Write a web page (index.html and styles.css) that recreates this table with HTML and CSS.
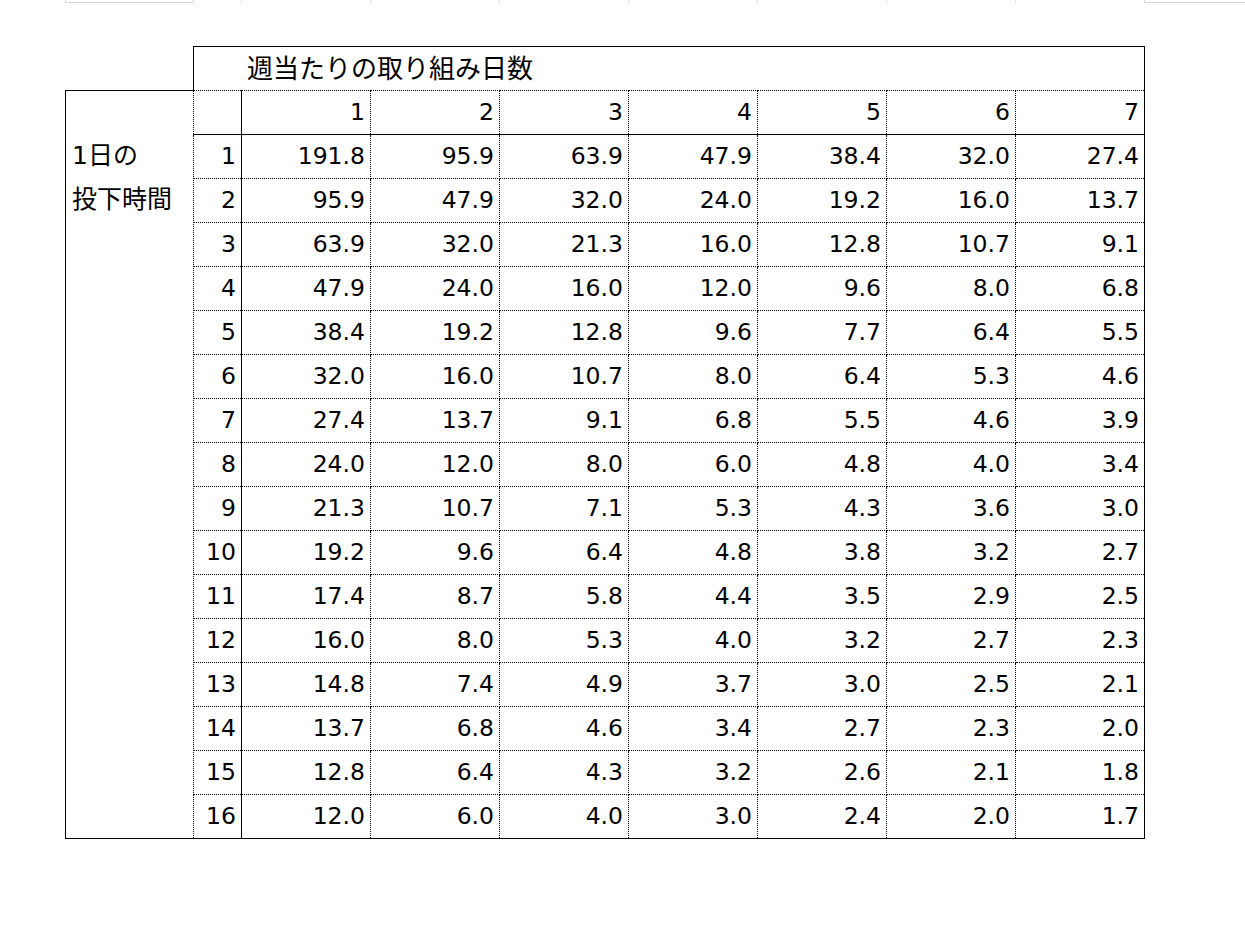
FILE: index.html
```html
<!DOCTYPE html>
<html lang="ja">
<head>
<meta charset="utf-8">
<link rel="stylesheet" href="styles.css">
</head>
<body>
<div class="strip">
  <span class="gap g1"></span>
  <span class="box b1"></span>
  <span class="gap g2"></span>
  <span class="tick"></span><span class="tick"></span><span class="tick"></span><span class="tick"></span><span class="tick"></span><span class="tick"></span><span class="tick"></span>
  <span class="box b2"></span>
</div>
<table class="sheet">
  <colgroup>
    <col class="c-label"><col class="c-num"><col class="c-data"><col class="c-data"><col class="c-data"><col class="c-data"><col class="c-data"><col class="c-data"><col class="c-data">
  </colgroup>
  <tr class="r-title">
    <td class="blank"></td>
    <td class="title" colspan="8">週当たりの取り組み日数</td>
  </tr>
  <tr class="r-head">
    <td class="side" rowspan="17"><div class="side-line">1日の</div><div class="side-line">投下時間</div></td>
    <td class="rn hd"></td>
    <td class="hd">1</td><td class="hd">2</td><td class="hd">3</td><td class="hd">4</td><td class="hd">5</td><td class="hd">6</td><td class="hd last">7</td>
  </tr>
  <tr><td class="rn">1</td><td>191.8</td><td>95.9</td><td>63.9</td><td>47.9</td><td>38.4</td><td>32.0</td><td class="last">27.4</td></tr>
  <tr><td class="rn">2</td><td>95.9</td><td>47.9</td><td>32.0</td><td>24.0</td><td>19.2</td><td>16.0</td><td class="last">13.7</td></tr>
  <tr><td class="rn">3</td><td>63.9</td><td>32.0</td><td>21.3</td><td>16.0</td><td>12.8</td><td>10.7</td><td class="last">9.1</td></tr>
  <tr><td class="rn">4</td><td>47.9</td><td>24.0</td><td>16.0</td><td>12.0</td><td>9.6</td><td>8.0</td><td class="last">6.8</td></tr>
  <tr><td class="rn">5</td><td>38.4</td><td>19.2</td><td>12.8</td><td>9.6</td><td>7.7</td><td>6.4</td><td class="last">5.5</td></tr>
  <tr><td class="rn">6</td><td>32.0</td><td>16.0</td><td>10.7</td><td>8.0</td><td>6.4</td><td>5.3</td><td class="last">4.6</td></tr>
  <tr><td class="rn">7</td><td>27.4</td><td>13.7</td><td>9.1</td><td>6.8</td><td>5.5</td><td>4.6</td><td class="last">3.9</td></tr>
  <tr><td class="rn">8</td><td>24.0</td><td>12.0</td><td>8.0</td><td>6.0</td><td>4.8</td><td>4.0</td><td class="last">3.4</td></tr>
  <tr><td class="rn">9</td><td>21.3</td><td>10.7</td><td>7.1</td><td>5.3</td><td>4.3</td><td>3.6</td><td class="last">3.0</td></tr>
  <tr><td class="rn">10</td><td>19.2</td><td>9.6</td><td>6.4</td><td>4.8</td><td>3.8</td><td>3.2</td><td class="last">2.7</td></tr>
  <tr><td class="rn">11</td><td>17.4</td><td>8.7</td><td>5.8</td><td>4.4</td><td>3.5</td><td>2.9</td><td class="last">2.5</td></tr>
  <tr><td class="rn">12</td><td>16.0</td><td>8.0</td><td>5.3</td><td>4.0</td><td>3.2</td><td>2.7</td><td class="last">2.3</td></tr>
  <tr><td class="rn">13</td><td>14.8</td><td>7.4</td><td>4.9</td><td>3.7</td><td>3.0</td><td>2.5</td><td class="last">2.1</td></tr>
  <tr><td class="rn">14</td><td>13.7</td><td>6.8</td><td>4.6</td><td>3.4</td><td>2.7</td><td>2.3</td><td class="last">2.0</td></tr>
  <tr><td class="rn">15</td><td>12.8</td><td>6.4</td><td>4.3</td><td>3.2</td><td>2.6</td><td>2.1</td><td class="last">1.8</td></tr>
  <tr class="r-end"><td class="rn">16</td><td>12.0</td><td>6.0</td><td>4.0</td><td>3.0</td><td>2.4</td><td>2.0</td><td class="last">1.7</td></tr>
</table>
</body>
</html>
```
FILE: styles.css
```css
html, body {
  margin: 0;
  padding: 0;
  background: #ffffff;
}

body {
  font-family: "DejaVu Sans", "Noto Sans CJK JP", sans-serif;
  color: #000000;
}

.strip {
  display: flex;
  height: 3px;
}
.strip .gap.g1 { width: 65px; }
.strip .gap.g2 { width: 47px; }
.strip .box {
  box-sizing: border-box;
  height: 3px;
  border: 1px solid #d6d6d6;
  border-top: none;
}
.strip .b1 { width: 129px; }
.strip .b2 { width: 101px; border-right: none; }
.strip .tick {
  box-sizing: border-box;
  width: 129px;
  height: 3px;
  border-left: 1px solid #dcdcdc;
}

.sheet {
  margin: 43px 0 0 65px;
  border-collapse: collapse;
  table-layout: fixed;
  width: 1080px;
}
.c-label { width: 128px; }
.c-num { width: 48px; }
.c-data { width: 129px; }

.sheet tr { height: 44px; }

.sheet td {
  padding: 0 5px 1px 0;
  height: 42px;
  text-align: right;
  vertical-align: middle;
  font-size: 23.5px;
  line-height: 30px;
  white-space: nowrap;
  border-right: 1px dotted #000;
  border-bottom: 1px dotted #000;
}

.sheet td.blank {
  border: none;
}

.sheet td.title {
  text-align: left;
  padding: 0 0 4px 53px;
  height: 39px;
  font-family: "Noto Sans CJK JP", sans-serif;
  font-size: 26px;
  border-top: 1px solid #000;
  border-left: 1px solid #000;
  border-right: 1px solid #000;
  border-bottom: 1px dotted #000;
}

.sheet td.side {
  text-align: left;
  vertical-align: top;
  padding: 43px 0 0 6px;
  font-size: 25px;
  border-top: 1px solid #000;
  border-left: 1px solid #000;
  border-bottom: 1px solid #000;
  border-right: 1px dotted #000;
}
.side-line {
  height: 44px;
  line-height: 44px;
}

.sheet td.rn {
  border-right: 1px solid #000;
}

.sheet td.hd {
  border-top: 1px dotted #000;
  border-bottom: 1px solid #000;
}

.sheet td.last {
  border-right: 1px solid #000;
}

.sheet tr.r-end td {
  border-bottom: 1px solid #000;
}
```
